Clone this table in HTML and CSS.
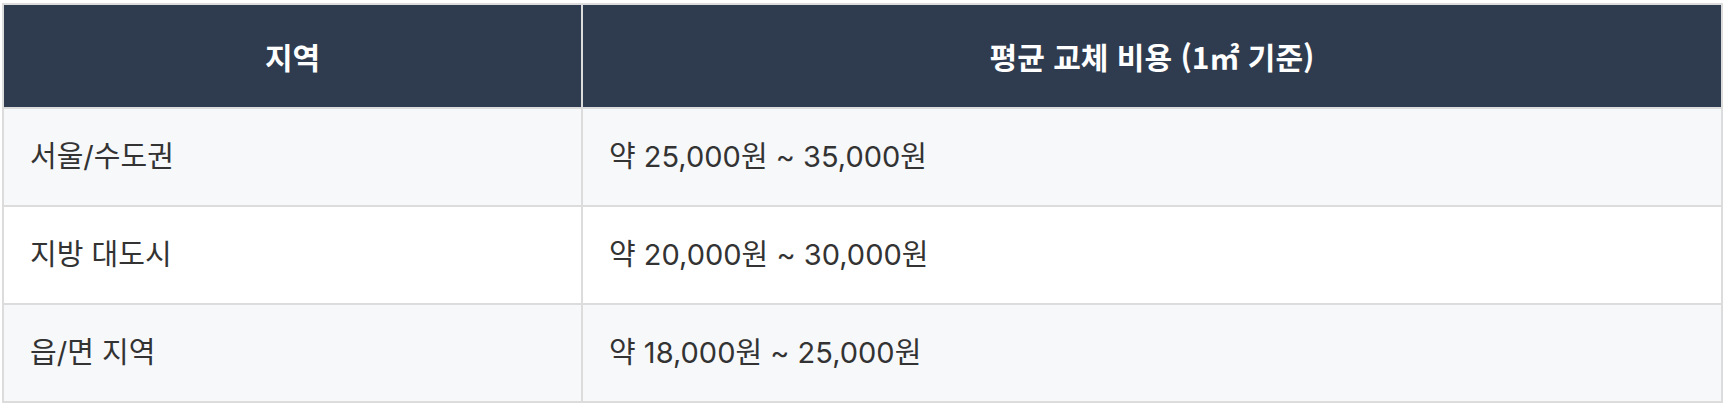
FILE: index.html
```html
<!DOCTYPE html>
<html lang="ko">
<head>
<meta charset="utf-8">
<link rel="stylesheet" href="styles.css">
</head>
<body>
<table class="cost-table">
  <colgroup>
    <col class="col-region">
    <col class="col-cost">
  </colgroup>
  <thead>
    <tr>
      <th>지역</th>
      <th>평균 교체 비용 (1㎡ 기준)</th>
    </tr>
  </thead>
  <tbody>
    <tr class="row-alt">
      <td>서울/수도권</td>
      <td>약 25,000원 ~ 35,000원</td>
    </tr>
    <tr>
      <td>지방 대도시</td>
      <td>약 20,000원 ~ 30,000원</td>
    </tr>
    <tr class="row-alt">
      <td>읍/면 지역</td>
      <td>약 18,000원 ~ 25,000원</td>
    </tr>
  </tbody>
</table>
</body>
</html>
```
FILE: styles.css
```css
html, body {
  margin: 0;
  padding: 0;
  background: #ffffff;
}

body {
  padding: 3px 0 0 2px;
  font-family: "Noto Sans CJK KR", sans-serif;
}

.cost-table {
  width: 1721px;
  border-collapse: collapse;
  border: 2px solid #dcdcdc;
  table-layout: fixed;
}

.col-region {
  width: 579px;
}

.cost-table th {
  background: #2f3c4f;
  color: #ffffff;
  font-weight: 700;
  font-size: 30px;
  line-height: 40px;
  padding: 31px 26px;
  text-align: center;
  border: 2px solid #dcdcdc;
}

.cost-table td {
  color: #333333;
  font-family: Inter, "Noto Sans CJK KR", sans-serif;
  font-size: 29px;
  line-height: 40px;
  padding: 28px 26px;
  text-align: left;
  border: 2px solid #dcdcdc;
  background: #ffffff;
}

.cost-table .row-alt td {
  background: #f7f8fa;
}
```
